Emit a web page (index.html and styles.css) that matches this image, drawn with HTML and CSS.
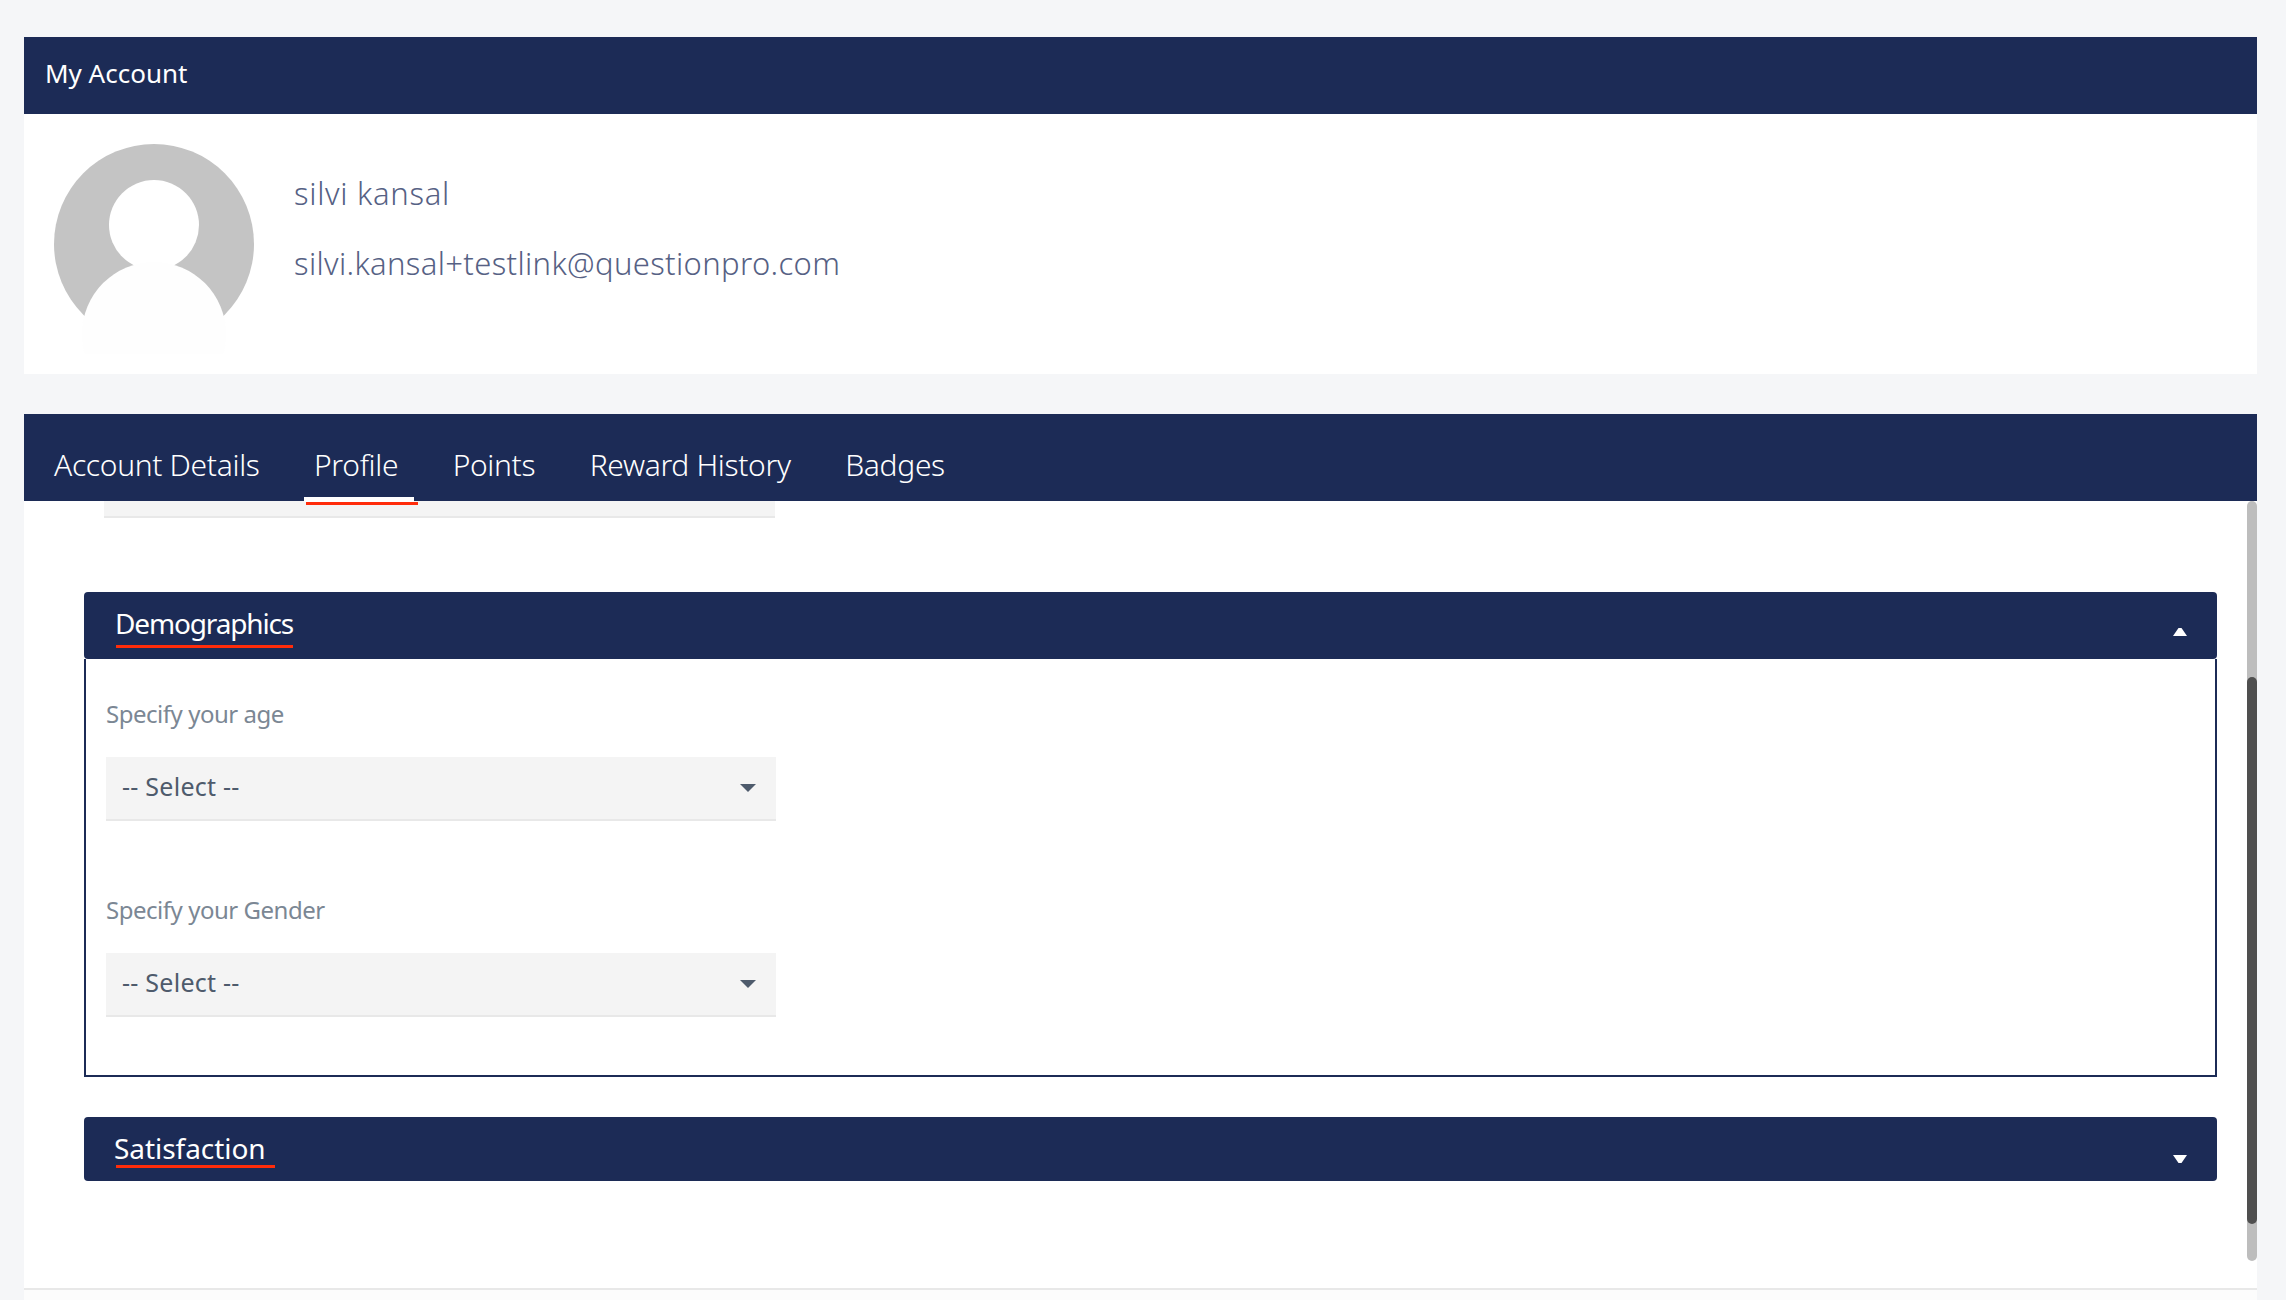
FILE: index.html
```html
<!DOCTYPE html>
<html lang="en">
<head>
<meta charset="utf-8">
<title>My Account</title>
<link rel="stylesheet" href="styles.css">
</head>
<body>
<main class="page">
  <header class="account-bar">My Account</header>
  <section class="identity">
    <svg class="avatar" viewBox="0 0 200 210" aria-hidden="true">
      <circle cx="100" cy="100" r="100" fill="#c4c4c4"/>
      <circle cx="100" cy="81" r="45" fill="#fff"/>
      <circle cx="100" cy="190" r="72" fill="#fefefe"/>
    </svg>
    <div class="identity-text">
      <p class="identity-line identity-name">silvi kansal</p>
      <p class="identity-line identity-email">silvi.kansal+testlink@questionpro.com</p>
    </div>
  </section>
  <nav class="tabs">
    <a class="tab">Account Details</a>
    <a class="tab tab-active">Profile</a>
    <a class="tab">Points</a>
    <a class="tab">Reward History</a>
    <a class="tab">Badges</a>
  </nav>
  <section class="pane">
    <div class="stub-select"></div>
    <div class="accordion-head head-demographics">
      <span class="accordion-title title-demographics">Demographics</span>
      <svg class="caret" viewBox="0 0 14 8" aria-hidden="true"><path d="M5.5 0h3L14 8H0z" fill="#fff"/></svg>
    </div>
    <div class="accordion-body">
      <label class="field-label">Specify your age</label>
      <div class="select"><span>-- Select --</span><svg class="select-caret" viewBox="0 0 16 8" aria-hidden="true"><path d="M0 0h16L8 8z" fill="#4e5b6c"/></svg></div>
      <label class="field-label label-second">Specify your Gender</label>
      <div class="select"><span>-- Select --</span><svg class="select-caret" viewBox="0 0 16 8" aria-hidden="true"><path d="M0 0h16L8 8z" fill="#4e5b6c"/></svg></div>
    </div>
    <div class="accordion-head head-satisfaction">
      <span class="accordion-title title-satisfaction">Satisfaction</span>
      <svg class="caret" viewBox="0 0 14 8" aria-hidden="true"><path d="M0 0h14L8.5 8h-3z" fill="#fff"/></svg>
    </div>
    <div class="scrollbar"><div class="scroll-thumb"></div></div>
  </section>
  <div class="pane-foot"></div>
</main>
</body>
</html>
```
FILE: styles.css
```css
* { box-sizing: border-box; }
html, body { margin: 0; height: 1300px; overflow: hidden; background: #f5f6f8; }
body { font-family: "Noto Sans", "Open Sans", sans-serif; }
.page { margin: 0 29px 0 24px; padding-top: 37px; }
.account-bar {
  height: 77px; background: #1c2b56; color: #fff;
  padding: 0 0 5px 21px; display: flex; align-items: center;
  font-size: 26px; font-weight: 400; letter-spacing: 0;
}
.identity { height: 260px; background: #fff; display: flex; padding: 30px 0 0 30px; }
.avatar { width: 200px; height: 210px; flex: none; }
.identity-text { margin-left: 40px; padding-top: 28px; color: #566184; font-size: 31px; font-weight: 300; }
.identity-line { margin: 0 0 28px; line-height: 42px; }
.identity-name { letter-spacing: 0.7px; }
.identity-email { letter-spacing: 0.35px; }
.tabs {
  margin-top: 40px; height: 87px; background: #1c2b56; color: #fff;
  display: flex; gap: 54.5px; padding: 30px 0 0 30px;
  font-size: 30px; font-weight: 300; letter-spacing: -0.33px; line-height: 42px;
}
.tab { position: relative; display: block; height: 42px; white-space: nowrap; }
.tab-active { z-index: 1; }
.tab-active::before {
  content: ""; position: absolute; left: -10px; width: 110px; top: 53px; height: 5px; background: #fff;
}
.tab-active::after {
  content: ""; position: absolute; left: -8px; width: 112px; top: 58px; height: 3px; background: #ff2c0a;
}
.pane { position: relative; height: 787px; background: #fff; }
.stub-select { position: relative; left: 80px; width: 671px; height: 17px; background: #f4f4f4; border-bottom: 2px solid #e8e8e8; }
.accordion-head {
  margin: 0 40px 0 60px; background: #1c2b56; border-radius: 4px; color: #fff;
  display: flex; justify-content: space-between; padding-left: 32px; padding-right: 30px;
  font-size: 28px; font-weight: 400;
}
.head-demographics { height: 67px; margin-top: 74px; }
.head-satisfaction { height: 64px; margin-top: 40px; }
.accordion-title { display: block; height: 56px; line-height: 62px; border-bottom: 3px solid #ff2c0a; white-space: nowrap; text-indent: -1px; }
.title-demographics { letter-spacing: -1.15px; }
.title-satisfaction { height: 51px; line-height: 62px; padding-right: 9px; letter-spacing: -0.05px; text-indent: -2px; }
.caret { width: 14px; height: 8px; margin-top: 36px; flex: none; }
.head-satisfaction .caret { margin-top: 38px; }
.accordion-body { margin: 0 40px 0 60px; height: 418px; border: 2px solid #1c2b56; border-top: 0; padding: 35px 0 0 20px; }
.field-label { display: block; height: 40px; line-height: 40px; color: #7b8794; font-size: 24px; font-weight: 400; letter-spacing: -0.47px; }
.label-second { margin-top: 69px; }
.select {
  margin-top: 23px; width: 670px; height: 64px; background: #f4f4f4; border-bottom: 2px solid #e8e8e8;
  display: flex; align-items: center; justify-content: space-between; padding: 0 20px 4px 16px;
  color: #4e5b6c; font-size: 25px; font-weight: 400; letter-spacing: 0.25px;
}
.select-caret { width: 16px; height: 8px; flex: none; margin-top: 3px; }
.scrollbar { position: absolute; right: 0; top: 0; width: 10px; height: 760px; background: #bdbdbd; border-radius: 5px; }
.scroll-thumb { position: absolute; left: 0; top: 176px; width: 10px; height: 547px; background: #4f4f4f; border-radius: 5px; }
.pane-foot { height: 12px; background: #fcfcfc; border-top: 2px solid #e8e8e8; }
```
